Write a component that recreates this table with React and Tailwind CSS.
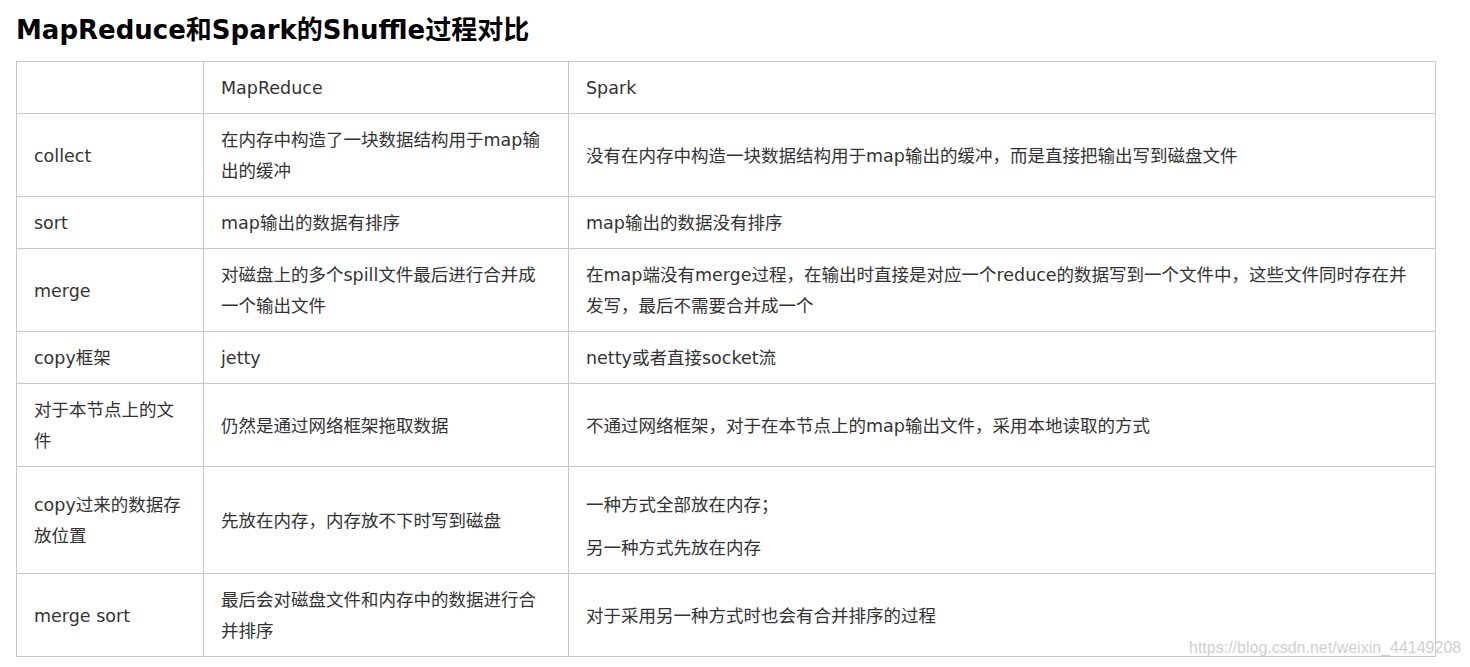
import React from "react";

const rows = [
  ["collect", "在内存中构造了一块数据结构用于map输出的缓冲", "没有在内存中构造一块数据结构用于map输出的缓冲，而是直接把输出写到磁盘文件"],
  ["sort", "map输出的数据有排序", "map输出的数据没有排序"],
  ["merge", "对磁盘上的多个spill文件最后进行合并成一个输出文件", "在map端没有merge过程，在输出时直接是对应一个reduce的数据写到一个文件中，这些文件同时存在并发写，最后不需要合并成一个"],
  ["copy框架", "jetty", "netty或者直接socket流"],
  ["对于本节点上的文件", "仍然是通过网络框架拖取数据", "不通过网络框架，对于在本节点上的map输出文件，采用本地读取的方式"],
  ["copy过来的数据存放位置", "先放在内存，内存放不下时写到磁盘", ["一种方式全部放在内存；", "另一种方式先放在内存"]],
  ["merge sort", "最后会对磁盘文件和内存中的数据进行合并排序", "对于采用另一种方式时也会有合并排序的过程"],
];

const font = { fontFamily: '"DejaVu Sans", "Noto Sans CJK SC", sans-serif' };

export default function App() {
  const td = "border border-[#c8c8c8] pl-[17px] pr-[18px] pt-[11px] pb-[9px] align-middle break-all";
  return (
    <div className="relative w-[1470px] h-[667px] bg-white overflow-hidden" style={font}>
      <h2 className="pl-[16px] pt-[10px] pb-[11px] text-[26px] leading-[40px] font-bold text-[#000]">
        MapReduce和Spark的Shuffle过程对比
      </h2>
      <table className="ml-[16px] w-[1419px] table-fixed border-collapse text-[17.5px] leading-[31px] text-[#333]">
        <colgroup>
          <col className="w-[187px]" />
          <col className="w-[365px]" />
          <col className="w-[867px]" />
        </colgroup>
        <tbody>
          <tr>
            <td className={td}></td>
            <td className={td}>MapReduce</td>
            <td className={td}>Spark</td>
          </tr>
          {rows.map((r, i) => (
            <tr key={i}>
              <td className={td}>{r[0]}</td>
              <td className={td}>{r[1]}</td>
              <td className={td}>
                {Array.isArray(r[2]) ? (
                  r[2].map((p, j) => (
                    <p key={j} className="mt-[12px]">{p}</p>
                  ))
                ) : (
                  r[2]
                )}
              </td>
            </tr>
          ))}
        </tbody>
      </table>
      <div
        className="absolute left-[1189px] top-[637px] text-[16px] leading-[22px] text-[#d0d0d0] whitespace-nowrap"
        style={{ fontFamily: '"Liberation Sans", Arial, sans-serif' }}
      >
        https://blog.csdn.net/weixin_44149208
      </div>
    </div>
  );
}
